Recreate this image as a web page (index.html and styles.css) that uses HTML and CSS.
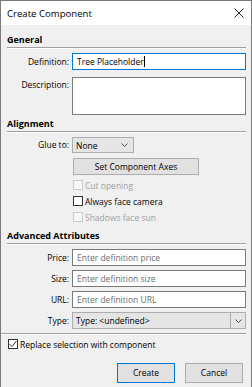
FILE: index.html
```html
<!DOCTYPE html>
<html>
<head>
<meta charset="utf-8">
<link rel="stylesheet" href="styles.css">
</head>
<body>
<div class="win">
  <div class="titlebar">
    <span class="title">Create Component</span>
    <svg class="close" width="10" height="10" viewBox="0 0 10 10"><path d="M0.5 0.5 L9.5 9.5 M9.5 0.5 L0.5 9.5" stroke="#222" stroke-width="1" fill="none"/></svg>
  </div>
  <div class="body">
    <div class="sec-head first">General</div>
    <div class="form">
      <label class="lbl">Definition:</label>
      <div class="input focus">Tree Placeholder<span class="caret"></span></div>
      <label class="lbl lbl-top">Description:</label>
      <div class="textarea"></div>
    </div>

    <div class="sec-head">Alignment</div>
    <div class="form">
      <label class="lbl">Glue to:</label>
      <div class="select small"><span>None</span><svg class="chev" width="7" height="4" viewBox="0 0 7 4"><path d="M0.5 0.5 L3.5 3.5 L6.5 0.5" stroke="#555" fill="none"/></svg></div>
      <span></span>
      <div class="btn axes">Set Component Axes</div>
      <span></span>
      <div class="checks">
        <div class="check disabled"><span class="box"></span>Cut opening</div>
        <div class="check"><span class="box"></span>Always face camera</div>
        <div class="check disabled"><span class="box"></span>Shadows face sun</div>
      </div>
    </div>

    <div class="sec-head adv">Advanced Attributes</div>
    <div class="form attrs">
      <label class="lbl">Price:</label>
      <div class="input ph">Enter definition price</div>
      <label class="lbl">Size:</label>
      <div class="input ph">Enter definition size</div>
      <label class="lbl">URL:</label>
      <div class="input ph">Enter definition URL</div>
      <label class="lbl">Type:</label>
      <div class="select wide"><span>Type: &lt;undefined&gt;</span><span class="drop"><svg width="7" height="4" viewBox="0 0 7 4"><path d="M0.5 0.5 L3.5 3.5 L6.5 0.5" stroke="#555" fill="none"/></svg></span></div>
    </div>

    <div class="sep"></div>
    <div class="check replace"><span class="box checked"><svg width="8" height="8" viewBox="0 0 8 8"><path d="M0.5 4 L3 6.5 L7.5 1" stroke="#333" stroke-width="1" fill="none"/></svg></span>Replace selection with component</div>

    <div class="buttons">
      <div class="btn default">Create</div>
      <div class="btn">Cancel</div>
    </div>
  </div>
</div>
</body>
</html>
```

FILE: styles.css
```css
* { box-sizing: border-box; }
html, body { margin: 0; padding: 0; }
body {
  width: 252px;
  height: 387px;
  overflow: hidden;
  font-family: "Open Sans", "Noto Sans", sans-serif;
  font-size: 8.5px;
  color: #000;
  background: #f0f0f0;
}
.win {
  width: 252px;
  height: 387px;
  border: 1px solid #7a7a7a;
  border-bottom: none;
  background: #f0f0f0;
  display: flex;
  flex-direction: column;
}
.titlebar {
  height: 24px;
  background: #fff;
  display: flex;
  align-items: center;
  justify-content: space-between;
  padding: 0 7px 0 6px;
  flex-shrink: 0;
}
.title { font-size: 9.6px; }
.close { display: block; }
.body {
  padding: 0 5px 0 6px;
  display: flex;
  flex-direction: column;
}
.sec-head {
  font-weight: bold;
  font-size: 9px;
  line-height: 12px;
  padding-top: 3px;
  padding-bottom: 1px;
  border-bottom: 1px solid #a0a0a0;
  box-shadow: 0 1px 0 #fff;
}
.sec-head.first { padding-top: 9px; }
.sec-head.adv { padding-top: 5px; }
.form {
  display: grid;
  grid-template-columns: 62px 1fr;
  column-gap: 3px;
  row-gap: 7px;
  margin-top: 5px;
  align-items: center;
}
.lbl { text-align: right; line-height: 12px; }
.lbl-top { align-self: start; margin-top: 2px; }
.input {
  height: 17px;
  border: 1px solid #7a7a7a;
  background: #fff;
  padding: 0 4px;
  line-height: 15px;
  white-space: nowrap;
  overflow: hidden;
}
.input.focus { border-color: #0078d7; }
.caret {
  display: inline-block;
  width: 1px;
  height: 11px;
  background: #000;
  vertical-align: -2px;
}
.input.ph { color: #6d6d6d; }
.textarea {
  height: 38px;
  border: 1px solid #7a7a7a;
  background: #fff;
}
.select {
  height: 16px;
  border: 1px solid #adadad;
  background: #e5e5e5;
  display: flex;
  align-items: center;
  justify-content: space-between;
  padding-left: 3px;
}
.select.small { width: 62px; padding-right: 5px; }
.chev { display: block; }
.select.wide { height: 17px; }
.drop {
  width: 15px;
  height: 100%;
  border-left: 1px solid #adadad;
  display: flex;
  align-items: center;
  justify-content: center;
}
.drop svg { display: block; }
.btn {
  border: 1px solid #adadad;
  background: #e1e1e1;
  text-align: center;
}
.axes {
  width: 126px;
  height: 17px;
  line-height: 15px;
  margin-left: 1px;
  margin-top: -2px;
}
.checks {
  display: flex;
  flex-direction: column;
  margin-top: -5px;
  margin-left: 1px;
}
.check {
  height: 16px;
  display: flex;
  align-items: center;
}
.check.disabled { color: #a0a0a0; }
.box {
  width: 10px;
  height: 10px;
  border: 1px solid #333;
  background: #fff;
  margin-right: 2px;
  display: flex;
  align-items: center;
  justify-content: center;
}
.check.disabled .box { border-color: #cccccc; background: #f7f7f7; }
.box svg { display: block; }
.attrs { row-gap: 4px; margin-top: 5px; }
.sep {
  height: 2px;
  border-top: 1px solid #a0a0a0;
  border-bottom: 1px solid #fff;
  margin: 4px 0 0 -6px;
}
.replace { margin-top: 1px; margin-left: 1px; }
.buttons {
  display: flex;
  justify-content: flex-end;
  gap: 10px;
  margin-top: 11px;
  padding-right: 3px;
}
.buttons .btn {
  width: 58px;
  height: 20px;
  line-height: 18px;
}
.btn.default { border-color: #0078d7; }
```
